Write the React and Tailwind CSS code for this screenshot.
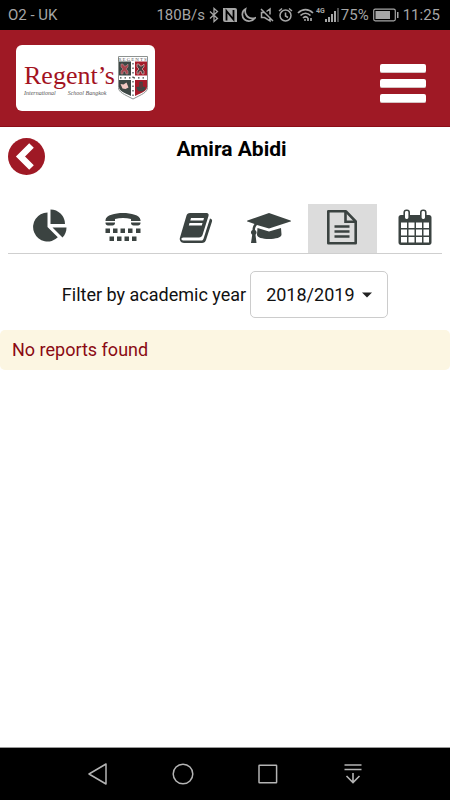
import React from "react";

const INK = "#3b4341";

function StatusBar() {
  return (
    <div className="flex h-[30px] items-center justify-between bg-black pr-[10px] pl-2 text-[15px] leading-[18px] text-[#a6a6a6]">
      <span>O2 - UK</span>
      <div className="flex items-center">
        <span>180B/s</span>
        <svg className="ml-1 h-4 w-[10px]" viewBox="0 0 10 16" fill="none" stroke="currentColor" strokeWidth="1.3">
          <path d="M1 4.5l7.5 7L5 14.5v-13l3.500 3L1 11.500" />
        </svg>
        <svg className="ml-1 h-4 w-[14px]" viewBox="0 0 14 16">
          <path d="M2 1h10a2 2 0 0 1 2 2v12H2a2 2 0 0 1-2-2V1z" fill="currentColor" />
          <path d="M3.500 13.500V4l7 8.500V3" fill="none" stroke="#000" strokeWidth="1.800" />
        </svg>
        <svg className="ml-1 h-4 w-[15px]" viewBox="0 0 15 16">
          <path d="M4.500 2C.5 4 .5 10 3.500 12.500c3 2.500 8 2 10.500-1.500-4 1-7.500-.5-9-3.500-.9-1.800-1-3.800-.5-5.500z" fill="none" stroke="currentColor" strokeWidth="1.700" />
        </svg>
        <svg className="ml-1 h-4 w-[14px]" viewBox="0 0 14 16" fill="none" stroke="currentColor" strokeWidth="1.500">
          <path d="M1 2l12 12M4.500 5.500H1.500v5h3L10 14V10.500M6.500 4.500L10 2v5.500" />
        </svg>
        <svg className="ml-1 h-4 w-[15px]" viewBox="0 0 15 16" fill="none" stroke="currentColor" strokeWidth="1.500">
          <circle cx="7.500" cy="8.500" r="5.500" />
          <path d="M7.500 5.500v3.500l2.500 1.500M1 4l3-2.500M14 4l-3-2.500" />
        </svg>
        <svg className="ml-1 h-4 w-[17px]" viewBox="0 0 17 16" fill="none" stroke="currentColor" strokeWidth="1.700">
          <path d="M1 6c4.500-4.500 10.500-4.500 15 0M3.500 8.500c3-3 7-3 10 0M6 11c1.500-1.500 3.500-1.500 5 0" />
          <circle cx="8" cy="13" r="1" fill="currentColor" stroke="none" />
          <path d="M11 14v-3M14 11v3" />
        </svg>
        <span className="ml-[2px] self-start text-[7px] leading-[10px] font-bold">4G</span>
        <svg className="h-4 w-[14px]" viewBox="0 0 14 16" fill="currentColor">
          <path d="M0 12h2v3H0zM3 10h2v5H3zM6 7h2v8H6zM9 4h2v11H9z" />
          <path d="M12 1h2v14h-2z" fill="#4a4a4a" />
        </svg>
        <span className="ml-[2px]">75%</span>
        <svg className="ml-1 h-[14px] w-[26px]" viewBox="0 0 26 14">
          <rect x=".7" y="1.200" width="21.600" height="11.600" rx="1.500" fill="none" stroke="currentColor" strokeWidth="1.200" />
          <path d="M2.500 3H17v8H2.500zM24 4h1.500v6H24z" fill="currentColor" />
        </svg>
        <span className="ml-1">11:25</span>
      </div>
    </div>
  );
}

function Crest() {
  return (
    <svg className="h-[44px] w-[30px]" viewBox="0 0 30 44">
      <path d="M.5.5h29v31c0 5-6 7-14.500 11.500C6.500 38.500.5 36.500.5 31.500z" fill="#fff" stroke="#8d9290" />
      <path d="M1 5.500h12v14H1z" fill="#3d4744" />
      <path d="M17 5.500h12v14H17z" fill="#a51c2a" />
      <path d="M1 24h12v16C6 36.500 1 35 1 31z" fill="#3d4744" />
      <path d="M17 24h12v7c0 4-5 5.500-12 9z" fill="#a51c2a" />
      <path d="M15 7v34M2 21.800h26" stroke="#3d4744" strokeWidth="1.200" strokeDasharray="1.500 3" />
      <path d="M3 8h2l1 2h2l2-2v3l-2 2 2 2v3H8l-1-3-2 1v2H3v-3l2-2-2-2z" fill="#a8434c" stroke="#b98d90" strokeWidth=".6" />
      <path d="M19 8h2l1 2h2l2-2v3l-2 2 2 2v3h-2l-1-3-2 1v2h-2v-3l2-2-2-2z" fill="#4b3f40" stroke="#d3a2a2" strokeWidth=".8" />
      <path d="M2.500 28l3 .5 3-2 2 5-3 1.500-3-.5z" fill="#f3c9c4" />
      <path d="M22 26.500h2v5h2v1.500h-6v-1.500h2zM19 31c1 5 7 5 8 0" fill="none" stroke="#3d4744" strokeWidth="1.300" />
      <text x="15" y="4.800" fontSize="5" letterSpacing="1" textAnchor="middle" fill="#555" fontFamily="Liberation Serif, serif">REGENTS</text>
    </svg>
  );
}

function Header() {
  return (
    <header className="flex h-[97px] items-center justify-between border-b border-[#8b0d18] bg-[#9f1925] pr-6 pl-4">
      <a href="#home" aria-label="Regent's International School Bangkok" className="flex h-[66px] w-[139px] items-center justify-between rounded-md bg-white pr-[7px] pl-2 font-['Liberation_Serif',serif]">
        <span className="flex flex-col pt-1">
          <span className="text-[26px] leading-[26px] text-[#a3131f]">Regent’s</span>
          <span className="flex gap-3 text-[6px] leading-[8px] text-[#555] italic">
            <span>International</span>
            <span>School Bangkok</span>
          </span>
        </span>
        <Crest />
      </a>
      <button type="button" aria-label="Menu" className="flex flex-col gap-[6px] pt-[10px]">
        <span className="h-[9px] w-[46px] rounded-[2px] border-b border-[#d5c4c4] bg-white" />
        <span className="h-[9px] w-[46px] rounded-[2px] border-b border-[#d5c4c4] bg-white" />
        <span className="h-[9px] w-[46px] rounded-[2px] border-b border-[#d5c4c4] bg-white" />
      </button>
    </header>
  );
}

const tabs = [
  {
    label: "Overview",
    icon: (
      <>
        <path d="M15.500 4.500V19l10.300 10.300A14.500 14.500 0 1 1 15.500 4.500z" />
        <path d="M18.500 1.500A14.500 14.500 0 0 1 33 16H18.500z" />
        <path d="M20.500 19.500h14c0 4-1.500 7.500-4 10z" />
      </>
    ),
  },
  {
    label: "Contact",
    icon: (
      <>
        <path d="M.5 12C1 7 10 5 18 5s17 2 17.500 7v1h-9.500v-2c-5-1.500-11-1.500-16 0v2H.5z" />
        <path d="M.5 14.500H10V15c0 1.500-1 2.500-2.500 2.500H3C1.500 17.500.5 16.500.5 15zM26 14.500h9.500V15c0 1.500-1 2.500-2.500 2.500h-4.500c-1.500 0-2.500-1-2.500-2.500z" />
        <path d="M.5 20.500H5v4.500H.5zM8 20.500h4.500v4.500H8zM15.500 20.500H20v4.500h-4.500zM23 20.500h4.500v4.500H23zM31 20.500h4.500v4.500H31z" />
        <path d="M4.500 28.500H9V33H4.500zM12 28.500h4.500V33H12zM19.500 28.500H24V33h-4.500zM27 28.500h4.500V33H27z" />
      </>
    ),
  },
  {
    label: "Homework",
    icon: (
      <>
        <path fillRule="evenodd" d="M12 5h16.500c1.800 0 2.600 1.400 2 3l-6 19c-.6 1.600-1.500 2.500-3.500 2.500H5.500c-1.500 0-2.500.8-2 2 .4.900 1.300 1 2.500 1h17c1.300 0 2-.5 2.500-1.800L32 10.500c2 .6 2.400 1.700 2 3l-6 18.500c-.6 1.800-2 3-4 3H6C3 35 1 32 2 29.500L8.500 7.500C9 6 10 5 12 5zM13 10l-.7 2.500h13L26 10zM11.500 15l-.7 2.500h13l.7-2.500z" />
      </>
    ),
  },
  {
    label: "Attainment",
    wide: true,
    icon: (
      <>
        <path d="M22 5l21.500 7.500c.7.300.7.800 0 1L22 20.500 10 17c-1.300 1-2 3-2 5 2 1.200 2 3.500.5 4.700L9.500 35H4l1.200-8.300C3.500 25.500 3.500 23 5.500 22c0-2.500.7-4.500 2-6L.5 13.500c-.7-.2-.7-.7 0-1z" />
        <path d="M10.500 20L22 23.500 34 20l.5 6.500c.2 3-6 4.500-12.500 4.500S9.800 29.500 10 26.500z" />
      </>
    ),
  },
  {
    label: "Reports",
    active: true,
    icon: (
      <g fill="none" stroke={INK} strokeWidth="2.600">
        <path d="M4.300 3.300H22l9.700 10.200v21.700H4.300z" strokeLinejoin="round" />
        <path d="M21.500 3.500v10.200h10" />
        <path d="M10.500 18.500h15M10.500 23.500h15M10.500 28.500h15" strokeWidth="2.400" />
      </g>
    ),
  },
  {
    label: "Calendar",
    icon: (
      <>
        <path fillRule="evenodd" d="M4 7h28c1.500 0 2.500 1 2.500 2.500v25c0 1.500-1 2.500-2.500 2.500H4c-1.500 0-2.500-1-2.500-2.500v-25C1.500 8 2.500 7 4 7zM4 14.500v5.500h6v-5.500zM11.500 14.500v5.500h6v-5.500zM19 14.500v5.500h6v-5.500zM26.500 14.500v5.500H32v-5.500zM4 21.500v6h6v-6zM11.500 21.500v6h6v-6zM19 21.500v6h6v-6zM26.500 21.500v6H32v-6zM4 29v5.500h6V29zM11.500 29v5.500h6V29zM19 29v5.500h6V29zM26.500 29v5.500H32V29z" />
        <rect x="7.200" y="2.200" width="5" height="9.500" rx="2.200" fill="#fff" stroke={INK} strokeWidth="1.600" />
        <rect x="23.800" y="2.200" width="5" height="9.500" rx="2.200" fill="#fff" stroke={INK} strokeWidth="1.600" />
      </>
    ),
  },
];

function Tabs() {
  return (
    <nav className="mx-2 border-b border-[#cfcfcf]">
      <div className="-mr-2 ml-[7px] grid grid-cols-6 gap-1">
        {tabs.map((tab) => (
          <button
            key={tab.label}
            type="button"
            aria-label={tab.label}
            className={`flex h-[49px] items-center justify-center pb-[3px] ${tab.active ? "bg-[#dcdcdc]" : ""}`}
          >
            <svg className={tab.wide ? "h-[38px] w-11" : "h-[38px] w-9"} viewBox={tab.wide ? "0 0 44 38" : "0 0 36 38"} fill={INK}>
              {tab.icon}
            </svg>
          </button>
        ))}
      </div>
    </nav>
  );
}

function SystemNav() {
  return (
    <div className="flex h-[53px] items-center justify-center gap-[61px] border-t border-[#999] bg-black text-[#b4b4b4]">
      <button type="button" aria-label="Back">
        <svg className="size-6" viewBox="0 0 24 24" fill="none" stroke="currentColor" strokeWidth="1.500" strokeLinejoin="round">
          <path d="M20 2v20L3 12z" />
        </svg>
      </button>
      <button type="button" aria-label="Home">
        <svg className="size-6" viewBox="0 0 24 24" fill="none" stroke="currentColor" strokeWidth="1.500">
          <circle cx="12" cy="12" r="9.800" />
        </svg>
      </button>
      <button type="button" aria-label="Recent apps">
        <svg className="size-6" viewBox="0 0 24 24" fill="none" stroke="currentColor" strokeWidth="1.500">
          <rect x="3" y="3.200" width="17.600" height="17.600" rx=".5" />
        </svg>
      </button>
      <button type="button" aria-label="Notifications">
        <svg className="size-6" viewBox="0 0 24 24" fill="none" stroke="currentColor" strokeWidth="1.600">
          <path d="M3.500 3h17M3.500 7.500h17M12 11v9.500M5.500 14l6.500 6.500 6.500-6.500" />
        </svg>
      </button>
    </div>
  );
}

export default function App() {
  return (
    <div className="flex min-h-screen flex-col bg-white font-[Roboto,sans-serif] text-[#111]">
      <StatusBar />
      <Header />
      <main className="flex-1">
        <div className="flex items-start px-2 pt-[11px]">
          <button type="button" aria-label="Go back" className="size-[37px] shrink-0">
            <svg className="size-full" viewBox="0 0 37 37">
              <circle cx="18.500" cy="18.500" r="18.500" fill="#9f1925" />
              <path d="M23.500 7.500L12.500 18.500l11 11" fill="none" stroke="#fff" strokeWidth="6.500" />
            </svg>
          </button>
          <h1 className="flex-1 pr-6 text-center text-[21px] leading-[22px] font-bold text-black">Amira Abidi</h1>
        </div>
        <div className="pt-[29px]">
          <Tabs />
        </div>
        <div className="flex items-center justify-center gap-1 pt-[17px] text-[18px] leading-6">
          <label htmlFor="year">Filter by academic year</label>
          <div className="grid items-center">
            <select id="year" className="col-start-1 row-start-1 h-[47px] w-[138px] appearance-none rounded-[5px] border border-[#ccc] bg-white pl-[15px]">
              <option>2018/2019</option>
            </select>
            <svg className="pointer-events-none col-start-1 row-start-1 mr-4 h-[6px] w-[10px] justify-self-end" viewBox="0 0 10 6">
              <path d="M0 .5h10L5 5.500z" fill="#222" />
            </svg>
          </div>
        </div>
        <p className="mt-3 rounded-[5px] bg-[#fcf6e2] px-3 py-2 text-[18px] leading-6 text-[#8a0a12]">No reports found</p>
      </main>
      <SystemNav />
    </div>
  );
}
